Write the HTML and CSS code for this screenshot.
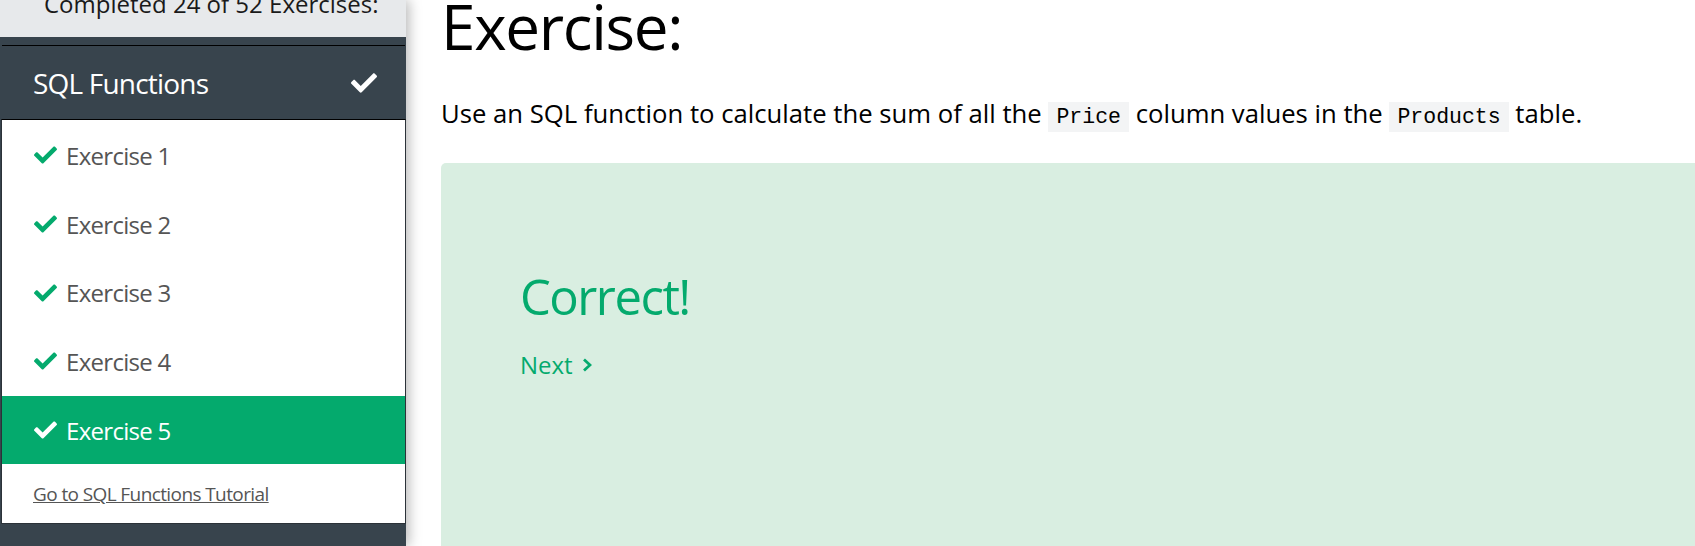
FILE: index.html
```html
<!DOCTYPE html>
<html lang="en">
<head>
<meta charset="utf-8">
<title>SQL Functions Exercise</title>
<link rel="stylesheet" href="styles.css">
</head>
<body>
<div class="page">
  <aside class="sidebar">
    <div class="progress"><div class="progress-text">Completed 24 of 52 Exercises:</div></div>
    <div class="chapter">
      <div class="chapter-head">
        <span class="chapter-title">SQL Functions</span>
        <svg class="check check-head" viewBox="0 64 512 384"><path d="M173.898 439.404l-166.4-166.4c-9.997-9.997-9.997-26.206 0-36.204l36.203-36.204c9.997-9.998 26.207-9.998 36.204 0L192 312.69 432.095 72.596c9.997-9.997 26.207-9.997 36.204 0l36.203 36.204c9.997 9.997 9.997 26.206 0 36.204l-294.4 294.401c-9.998 9.997-26.207 9.997-36.204-.001z"/></svg>
      </div>
      <ul class="chapter-list">
        <li class="item"><svg class="check" viewBox="0 64 512 384"><path d="M173.898 439.404l-166.4-166.4c-9.997-9.997-9.997-26.206 0-36.204l36.203-36.204c9.997-9.998 26.207-9.998 36.204 0L192 312.69 432.095 72.596c9.997-9.997 26.207-9.997 36.204 0l36.203 36.204c9.997 9.997 9.997 26.206 0 36.204l-294.4 294.401c-9.998 9.997-26.207 9.997-36.204-.001z"/></svg><span>Exercise 1</span></li>
        <li class="item"><svg class="check" viewBox="0 64 512 384"><path d="M173.898 439.404l-166.4-166.4c-9.997-9.997-9.997-26.206 0-36.204l36.203-36.204c9.997-9.998 26.207-9.998 36.204 0L192 312.69 432.095 72.596c9.997-9.997 26.207-9.997 36.204 0l36.203 36.204c9.997 9.997 9.997 26.206 0 36.204l-294.4 294.401c-9.998 9.997-26.207 9.997-36.204-.001z"/></svg><span>Exercise 2</span></li>
        <li class="item"><svg class="check" viewBox="0 64 512 384"><path d="M173.898 439.404l-166.4-166.4c-9.997-9.997-9.997-26.206 0-36.204l36.203-36.204c9.997-9.998 26.207-9.998 36.204 0L192 312.69 432.095 72.596c9.997-9.997 26.207-9.997 36.204 0l36.203 36.204c9.997 9.997 9.997 26.206 0 36.204l-294.4 294.401c-9.998 9.997-26.207 9.997-36.204-.001z"/></svg><span>Exercise 3</span></li>
        <li class="item"><svg class="check" viewBox="0 64 512 384"><path d="M173.898 439.404l-166.4-166.4c-9.997-9.997-9.997-26.206 0-36.204l36.203-36.204c9.997-9.998 26.207-9.998 36.204 0L192 312.69 432.095 72.596c9.997-9.997 26.207-9.997 36.204 0l36.203 36.204c9.997 9.997 9.997 26.206 0 36.204l-294.4 294.401c-9.998 9.997-26.207 9.997-36.204-.001z"/></svg><span>Exercise 4</span></li>
        <li class="item active"><svg class="check" viewBox="0 64 512 384"><path d="M173.898 439.404l-166.4-166.4c-9.997-9.997-9.997-26.206 0-36.204l36.203-36.204c9.997-9.998 26.207-9.998 36.204 0L192 312.69 432.095 72.596c9.997-9.997 26.207-9.997 36.204 0l36.203 36.204c9.997 9.997 9.997 26.206 0 36.204l-294.4 294.401c-9.998 9.997-26.207 9.997-36.204-.001z"/></svg><span>Exercise 5</span></li>
        <li class="tutorial"><a href="#" class="tutorial-link">Go to SQL Functions Tutorial</a></li>
      </ul>
    </div>
  </aside>
  <main class="main">
    <h1 class="title">Exercise:</h1>
    <p class="task">Use an SQL function to calculate the sum of all the <code class="code">Price</code> column values in the <code class="code">Products</code> table.</p>
    <div class="panel">
      <div class="correct">Correct!</div>
      <a href="#" class="next">Next <svg class="chev" viewBox="0 0 10 14"><polyline points="2,1.5 8,7 2,12.5"/></svg></a>
    </div>
  </main>
</div>
</body>
</html>
```

FILE: styles.css
```css
html, body {
  margin: 0;
  padding: 0;
  background: #fff;
}

body {
  font-family: "Open Sans", "Noto Sans", sans-serif;
  overflow: hidden;
}

.page {
  display: flex;
  height: 546px;
  overflow: hidden;
}

/* ---------- Sidebar ---------- */
.sidebar {
  flex: 0 0 406px;
  width: 406px;
  background: #38444d;
  box-shadow: 3px 0 12px rgba(0, 0, 0, 0.28);
  position: relative;
  z-index: 1;
}

.progress {
  height: 37px;
  background: #e7e9eb;
  overflow: hidden;
}

.progress-text {
  margin-top: -8px;
  padding-left: 44px;
  font-size: 24px;
  line-height: 24px;
  color: #1a1a1a;
  white-space: nowrap;
}

.chapter {
  margin: 8px 0 0 1px;
}

.chapter-head {
  margin: 0 1px;
  border-top: 1px solid #000;
  height: 73px;
  display: flex;
  align-items: center;
  justify-content: space-between;
  padding: 0 28px 0 31px;
  color: #fff;
}

.chapter-title {
  font-size: 28px;
  letter-spacing: -0.8px;
  line-height: 1;
}

.check {
  width: 23px;
  height: 18px;
  fill: #04aa6d;
  flex: 0 0 auto;
}

.check-head {
  width: 26px;
  height: 20px;
  fill: #fff;
}

.chapter-list {
  list-style: none;
  margin: 0;
  padding: 1px 0 0;
  background: #fff;
  border: 1px solid #2b3238;
  border-top-color: #000;
}

.item {
  height: 68.7px;
  display: flex;
  align-items: center;
  gap: 9px;
  padding-left: 32px;
  font-size: 24px;
  letter-spacing: -0.7px;
  color: #555;
}

.item.active {
  background: #04aa6d;
  color: #fff;
}

.item.active .check {
  fill: #fff;
}

.tutorial {
  height: 59px;
  display: flex;
  align-items: center;
  padding-left: 31px;
}

.tutorial-link {
  font-size: 19px;
  letter-spacing: -0.6px;
  color: #555;
  text-decoration: underline;
}

/* ---------- Main ---------- */
.main {
  flex: 1 1 auto;
  min-width: 0;
  padding-left: 35px;
}

.title {
  margin: -9px 0 0;
  font-size: 62px;
  line-height: 70px;
  font-weight: 400;
  letter-spacing: -1.3px;
  color: #000;
}

.task {
  margin: 38px 0 0;
  font-size: 25.7px;
  line-height: 30px;
  color: #000;
  white-space: nowrap;
}

.code {
  font-family: "Liberation Mono", "DejaVu Sans Mono", monospace;
  font-size: 21.5px;
  background: #f3f4f5;
  padding: 3px 8px;
}

.panel {
  margin: 31px -20px 0 0;
  height: 420px;
  background: #d9eee1;
  border-radius: 5px;
  padding: 103px 0 0 79px;
}

.correct {
  font-size: 49px;
  line-height: 60px;
  letter-spacing: -1.5px;
  color: #04aa6d;
}

.next {
  display: inline-flex;
  align-items: center;
  gap: 9px;
  margin-top: 24px;
  font-size: 24px;
  line-height: 30px;
  color: #04aa6d;
  text-decoration: none;
}

.chev {
  width: 10px;
  height: 14px;
  fill: none;
  stroke: #04aa6d;
  stroke-width: 2.8;
}
```
